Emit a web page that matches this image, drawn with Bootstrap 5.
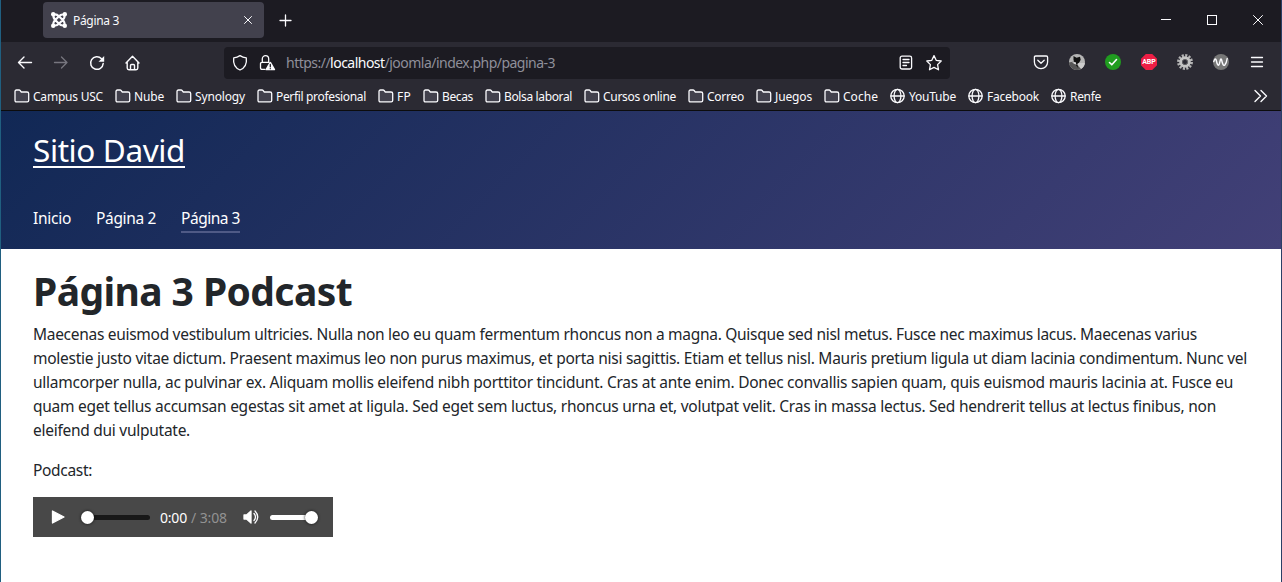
<!DOCTYPE html>
<html lang="es">
<head>
<meta charset="utf-8">
<title>Página 3</title>
<link href="https://cdn.jsdelivr.net/npm/bootstrap@5.3.0/dist/css/bootstrap.min.css" rel="stylesheet">
<style>
body{font-family:"Noto Sans","Open Sans",sans-serif;color:#22262a;background:#fff;height:582px;overflow:hidden;border-left:1px solid #205f80;border-right:1px solid #2b3f66}
svg{display:block;flex:none;fill:none;stroke:#fbfbfe;stroke-width:1.3;stroke-linecap:round;stroke-linejoin:round;overflow:visible}
[data-w]{display:block;white-space:nowrap}
.tabstrip{height:42px;background:#1c1b22;padding:2px 0 4px 42px}
.browser-tab{width:221px;height:36px;background:#42414d;border-radius:4px;padding:0 11px 0 8px;font-size:12px;color:#fbfbfe}
.tab-title{margin-left:6px;padding-top:1px}
.winctl{gap:30px;padding-right:15px;margin-top:-1px}
.toolbar-main{height:41px;background:#2b2a33;padding:0 16px 0 16px}
.urlbar{width:726px;height:32px;background:#1c1b22;border-radius:4px;margin-left:83px;padding:0 8px;font-size:14px;color:#8f8f9a}
.urlbar b{font-weight:400;color:#fbfbfe}
.abp{width:16px;height:16px;background:#ed1e45;clip-path:polygon(30% 0,70% 0,100% 30%,100% 70%,70% 100%,30% 100%,0 70%,0 30%);color:#fff;font:700 7px/16px Roboto,sans-serif;text-align:center}
.bookmarks{height:27px;background:#2b2a33;padding:0 12px 0 13px;gap:12px;font-size:12px;color:#fbfbfe}
.bookmarks .bm{gap:3px}
.bookmarks svg{margin-top:-1px}
.chrome-end{height:1px;background:#0c0c0d}
.site-head{height:138px;background:linear-gradient(135deg,#112855,#424077);padding:0 32px}
.brand{font-size:31.5px;font-weight:400;line-height:38px;padding-top:20px;color:#fff}
.brand a{color:#fff;width:152px;height:37px;border-bottom:2px solid #fff;text-decoration:none}
.menu{gap:25px;font-size:15.5px;line-height:24px;margin-top:38px}
.menu a{color:#fff;text-decoration:none;height:27px}
.menu .current{border-bottom:2px solid #4f5a86}
.content{padding:18px 32px}
.content h1{font-size:39px;font-weight:700;line-height:48px;margin:0 0 7px}
.content p{font-size:15.5px;line-height:24px;margin:0 0 16px}
.player{width:300px;height:40px;background:#484848;color:#fff;font-size:14px;margin-top:-1px}
.track{width:68px;height:5px;border-radius:3px;background:#181818;margin-left:17px}
.track .knob{margin-left:-1px}
.track.vol{width:46px;background:#fff;margin-left:9px}
.track.vol .knob{margin-right:-2px}
.knob{display:block;flex:none;width:13px;height:13px;border-radius:50%;background:#fff;box-shadow:0 0 3px #111}
</style>
</head>
<body>
<svg width="0" height="0" class="position-absolute"><defs>
<symbol id="folder" viewBox="0 0 16 16"><path fill="#42414d" d="M1 12.500V3.500q0-1.500 1.500-1.500h2.600q.6 0 1 .5L7.300 4h5.700q1.700 0 1.700 1.500v7q0 1.300-1.500 1.300H2.400Q1 13.800 1 12.500z"/></symbol>
<symbol id="globe" viewBox="0 0 16 16"><circle cx="7.500" cy="8" r="6.700"/><ellipse cx="7.500" cy="8" rx="3.400" ry="6.700"/><path d="M1 8h13"/></symbol>
</defs></svg>

<div class="tabstrip d-flex align-items-center">
  <div class="browser-tab d-flex align-items-center">
    <svg width="16" height="16" viewBox="0 0 16 16" style="stroke-width:2.100"><path d="M2.500 12.800C1.800 10.500 3 9.200 4.500 7.700L7.700 4.500C9.200 3 10.800 2 13 2.800M3 2.500C5.200 2 6.700 3 8.200 4.500l3.300 3.200c1.500 1.500 2.500 3 1.800 5M13.300 3c.8 2-.3 3.800-1.800 5.300l-3.300 3.200C6.700 13 5 14 3 13.300M2.700 3c-.7 2 .3 3.800 1.800 5.300l3.200 3.200c1.500 1.500 3.300 2.500 5.500 1.800"/><g fill="#fff" stroke="none"><circle cx="2.200" cy="2.300" r="2.200"/><circle cx="13.800" cy="2.300" r="2.200"/><circle cx="2.200" cy="13.700" r="2.200"/><circle cx="13.800" cy="13.700" r="2.200"/></g></svg>
    <span class="tab-title" data-w="46">Página 3</span>
    <svg class="ms-auto" width="10" height="10"><path stroke-width="1" d="M1.500 1.500l7 7M8.500 1.500l-7 7"/></svg>
  </div>
  <svg width="13" height="13" style="margin-left:15px"><path d="M6.500 1v11M1 6.500h11"/></svg>
  <div class="winctl d-flex align-items-center ms-auto">
    <svg width="16" height="16" shape-rendering="crispEdges"><path style="stroke-width:1" d="M3 7.500h10"/></svg>
    <svg width="16" height="16" shape-rendering="crispEdges"><path style="stroke-width:1" d="M3.500 3.500h9v9h-9z"/></svg>
    <svg width="16" height="16"><path style="stroke-width:1" d="M3.500 3.500l9 9M12.500 3.500l-9 9"/></svg>
  </div>
</div>

<div class="toolbar-main d-flex align-items-center">
  <div class="d-flex" style="gap:20px">
    <svg width="16" height="16"><path style="stroke-width:1.400" d="M14.500 7.500H1.500M7 2L1.500 7.500 7 13"/></svg>
    <svg width="16" height="16"><path stroke="#77767f" style="stroke-width:1.300" d="M1.500 7.500H14M8.500 2L14 7.500 8.500 13"/></svg>
    <svg width="16" height="16"><path style="stroke-width:1.500" d="M12.500 3.700A6.300 6.300 0 1 0 14.200 8.500"/><path fill="#fbfbfe" stroke="none" d="M15.200 1V6.700H9.500z"/></svg>
    <svg width="16" height="16"><path style="stroke-width:1.400" d="M1 8L7.500 1.300 14 8M2.200 7v6q0 1.700 1.700 1.700h7.200q1.700 0 1.700-1.700V7M5.500 14.500v-4q0-1 1-1h2q1 0 1 1v4"/></svg>
  </div>
  <div class="urlbar d-flex align-items-center">
    <svg width="16" height="16"><path d="M8 .6c2 1.400 4 2 6.300 2.200C15 8.300 13 12.800 8 15 3 12.800 1 8.300 1.700 2.800 4 2.600 6 2 8 .6z"/></svg>
    <svg width="20" height="16" style="margin-left:11px"><path d="M6 14.300H3q-1.500 0-1.500-1.500V8.800Q1.500 7.300 3 7.300h7M3.300 7V3.900a3.200 3.200 0 0 1 6.400 0V7"/><path fill="#fbfbfe" stroke="none" d="M11.300 6.700q.5 0 .8.600l4 7q.4 1-.6 1H7q-1 0-.5-1l4-7q.3-.6.8-.6z"/><path stroke="#1c1b22" d="M11.300 9.500v2.300M11.300 13.600v.1"/></svg>
    <span style="margin-left:7px" data-w="269">https://<b>localhost</b>/joomla/index.php/pagina-3</span>
    <svg class="ms-auto" width="16" height="16"><rect x="2.200" y="1.200" width="11.400" height="12.800" rx="1.800"/><path d="M5 4.500h6M5 7.500h6M5 10.500h3.500"/></svg>
    <svg width="16" height="16" style="margin-left:12px"><path d="M8 .6l2.200 4.700 5 .7-3.600 3.600.9 5.200L8 12.400 3.500 14.800l.9-5.200L.8 6l5-.7z"/></svg>
  </div>
  <div class="d-flex ms-auto" style="gap:20px;margin-top:-1px">
    <svg width="16" height="16"><path d="M2.700 2h10.600q1.300 0 1.300 1.300V8A6.600 6.600 0 0 1 1.400 8V3.300Q1.400 2 2.700 2zM4.800 6.200L8 9.200l3.200-3"/></svg>
    <svg width="16" height="16" style="stroke:none"><circle cx="8" cy="8" r="8" fill="#b5b5b5"/><path fill="#ccc" d="M8 9h7.900A8 8 0 0 1 12 15z"/><path fill="#555" d="M0 8.500l5-1 7 7.500A8 8 0 0 1 0 8.500z"/><path fill="#111" d="M4.500 2l3 1.700L11 2.700l.7 3-1.500 2.800-2 1.500 1 4L6 10 4.500 6z"/><path fill="#e5e5e5" d="M3 8.500l3.500-.5 1 3z"/></svg>
    <svg width="16" height="16"><circle cx="8" cy="8" r="8" fill="#209c20" style="stroke:none"/><path style="stroke-width:1.600" d="M4.500 8.500l2.300 2.300L11.500 5.500"/></svg>
    <div class="abp">ABP</div>
    <svg width="16" height="16"><circle cx="8" cy="8" r="6.600" stroke="#b5b5b5" style="stroke-width:2.700;stroke-linecap:butt" stroke-dasharray="2.100 1.356"/><circle cx="8" cy="8" r="4.300" stroke="#c4c4c4" style="stroke-width:3"/><circle cx="8" cy="8" r="2.600" fill="#2b2a33" stroke="#777" style="stroke-width:.6"/></svg>
    <svg width="16" height="16"><circle cx="8" cy="8" r="8" fill="#777" style="stroke:none"/><path style="stroke-width:1.400" d="M.8 7.500Q2.300 3 3.300 6.500q1.500 7 3 3.500L7.500 5.500q.5-1.200 1 0 1.500 7.500 3.300 5.500 1.700-2 2.400-6.500"/></svg>
    <svg width="16" height="16"><path d="M2.500 3.500h11M2.500 8h11M2.500 12.500h11"/></svg>
  </div>
</div>

<nav class="bookmarks d-flex align-items-center" id="bookmarks">
  <svg id="more" class="ms-auto" width="16" height="16"><path style="stroke-width:1.400" d="M2 2.500L7.500 8 2 13.500M8 2.500L13.500 8 8 13.500"/></svg>
</nav>
<div class="chrome-end"></div>

<header class="site-head">
  <div class="brand"><a href="#" data-w="152">Sitio David</a></div>
  <nav class="menu d-flex">
    <a href="#" data-w="38">Inicio</a><a href="#" data-w="60">Página 2</a><a href="#" class="current" data-w="59">Página 3</a>
  </nav>
</header>

<main class="content">
  <h1 data-w="319">Página 3 Podcast</h1>
  <p>
    <span data-w="1164">Maecenas euismod vestibulum ultricies. Nulla non leo eu quam fermentum rhoncus non a magna. Quisque sed nisl metus. Fusce nec maximus lacus. Maecenas varius</span>
    <span data-w="1214">molestie justo vitae dictum. Praesent maximus leo non purus maximus, et porta nisi sagittis. Etiam et tellus nisl. Mauris pretium ligula ut diam lacinia condimentum. Nunc vel</span>
    <span data-w="1200">ullamcorper nulla, ac pulvinar ex. Aliquam mollis eleifend nibh porttitor tincidunt. Cras at ante enim. Donec convallis sapien quam, quis euismod mauris lacinia at. Fusce eu</span>
    <span data-w="1183">quam eget tellus accumsan egestas sit amet at ligula. Sed eget sem luctus, rhoncus urna et, volutpat velit. Cras in massa lectus. Sed hendrerit tellus at lectus finibus, non</span>
    <span data-w="157">eleifend dui vulputate.</span>
  </p>
  <p><span data-w="59">Podcast:</span></p>
  <div class="player d-flex align-items-center">
    <svg width="14" height="16" style="margin-left:18px"><path fill="#fff" stroke="#fff" d="M1.500 2v12L13 8z"/></svg>
    <div class="track d-flex align-items-center"><span class="knob"></span></div>
    <span style="margin-left:10px" data-w="27">0:00</span>
    <span style="margin-left:4px;color:#929292" data-w="36">/ 3:08</span>
    <svg width="18" height="16" style="margin-left:16px"><path fill="#fff" stroke="#fff" d="M1 6v4h2.500L8 14V2L3.500 6z"/><path d="M11 4.500q3 3.500 0 7M12 2q5.500 6 0 12"/></svg>
    <div class="track vol d-flex align-items-center justify-content-end"><span class="knob"></span></div>
  </div>
</main>

<script src="https://cdn.jsdelivr.net/npm/bootstrap@5.3.0/dist/js/bootstrap.bundle.min.js"></script>
<script>
// Bookmark label, text width, icon
const marks=[["Campus USC",70],["Nube",30],["Synology",50],["Perfil profesional",90],["FP",14],["Becas",31],["Bolsa laboral",68],["Cursos online",73],["Correo",37],["Juegos",37],["Coche",35],["YouTube",47,"globe"],["Facebook",52,"globe"],["Renfe",31,"globe"]];
document.getElementById("more").insertAdjacentHTML("beforebegin",marks.map(([t,w,i])=>`<div class="bm d-flex align-items-center"><svg width="16" height="16"><use href="#${i||"folder"}"/></svg><span data-w="${w}">${t}</span></div>`).join(""));
// Track each label so that it fills its measure
document.querySelectorAll("[data-w]").forEach(e=>{
  const w=+e.dataset.w,r=document.createRange();
  r.selectNodeContents(e);
  const n=r.getBoundingClientRect().width;
  e.style.letterSpacing=(w-n)/e.textContent.length+"px";
  e.style.width=w+"px";
});
</script>
</body>
</html>
